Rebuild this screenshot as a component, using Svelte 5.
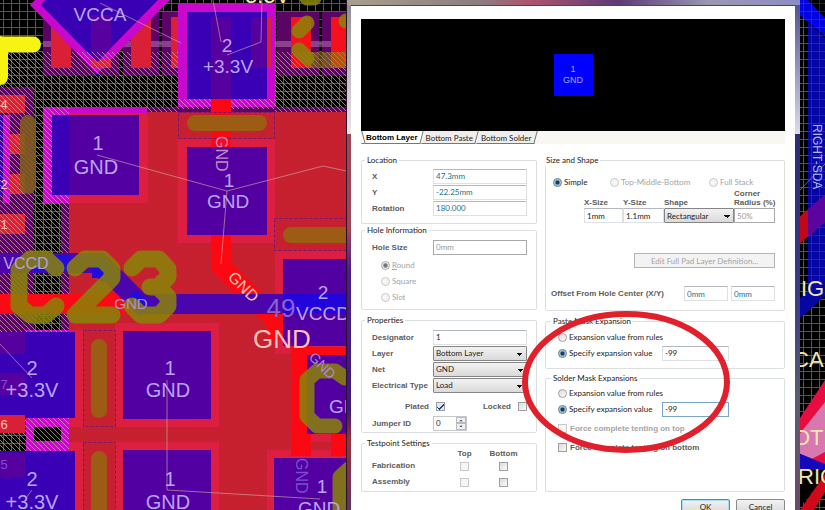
<script>
  let layer = $state('Bottom Layer');
  let net = $state('GND');
  let electrical = $state('Load');
  let shape = $state('Rectangular');
  let hole = $state('round');
  let stack = $state('simple');
  let paste = $state('value');
  let solder = $state('value');

  const location = [
    { id: 'x', label: 'X', value: '47.3mm' },
    { id: 'y', label: 'Y', value: '-22.25mm' },
    { id: 'rotation', label: 'Rotation', value: '180.000' }
  ];
  const holes = [
    { id: 'round', key: 'R', label: 'ound' },
    { id: 'square', key: '', label: 'Square' },
    { id: 'slot', key: '', label: 'Slot' }
  ];
  const lilac = '#b8a4f2';
  const cream = '#f3e6b0';
  const dim = '#7a4fd0';
  const pink = '#ffc0b8';
  const netNames = [
    { t: 'VCCA', x: 100, y: 21, s: 19, c: lilac },
    { t: '2', x: 227, y: 52, s: 19, c: lilac },
    { t: '+3.3V', x: 228, y: 73, s: 19, c: lilac },
    { t: '1', x: 98, y: 150, s: 20, c: lilac },
    { t: 'GND', x: 96, y: 174, s: 20, c: lilac },
    { t: '1', x: 229, y: 187, s: 19, c: lilac },
    { t: 'GND', x: 228, y: 208, s: 19, c: lilac },
    { t: '2', x: 323, y: 299, s: 19, c: lilac },
    { t: 'VCCD', x: 323, y: 320, s: 19, c: lilac },
    { t: '49', x: 281, y: 317, s: 26, c: '#8a62cc' },
    { t: 'GND', x: 282, y: 348, s: 26, c: pink },
    { t: '2', x: 32, y: 375, s: 20, c: lilac },
    { t: '+3.3V', x: 32, y: 397, s: 20, c: lilac },
    { t: '1', x: 170, y: 375, s: 20, c: lilac },
    { t: 'GND', x: 168, y: 397, s: 20, c: lilac },
    { t: '2', x: 32, y: 486, s: 20, c: lilac },
    { t: '+3.3V', x: 32, y: 509, s: 20, c: lilac },
    { t: '1', x: 170, y: 486, s: 20, c: lilac },
    { t: 'GND', x: 168, y: 509, s: 20, c: lilac },
    { t: 'GND', x: 350, y: 413, s: 19, c: lilac },
    { t: '1', x: 322, y: 493, s: 19, c: lilac },
    { t: 'GND', x: 319, y: 515, s: 19, c: lilac },
    { t: 'VCCD', x: 26, y: 269, s: 16, c: '#b7a0d8' },
    { t: 'GND', x: 131, y: 309, s: 15, c: '#c08cc0' },
    { t: '4', x: 4, y: 109, s: 13, c: pink },
    { t: '2', x: 4, y: 189, s: 13, c: pink },
    { t: '1', x: 4, y: 229, s: 13, c: pink },
    { t: '7', x: 4, y: 389, s: 13, c: dim },
    { t: '6', x: 4, y: 429, s: 13, c: pink },
    { t: '5', x: 4, y: 469, s: 13, c: dim }
  ];
  const tags = [
    { t: 'GND', x: 216, y: 136, a: 90, s: 16, c: '#c48ac0' },
    { t: 'GND', x: 227, y: 278, a: 45, s: 16, c: pink },
    { t: 'GND', x: 308, y: 358, a: 45, s: 14, c: '#b08ad0' },
    { t: 'GND', x: 296, y: 458, a: 90, s: 16, c: dim }
  ];
</script>

<main class="desktop">
  <svg class="board" viewBox="0 0 825 510" preserveAspectRatio="xMinYMin slice" aria-hidden="true">
    <defs>
      <pattern id="grid" width="8" height="8" patternUnits="userSpaceOnUse">
        <path d="M3.5 0V8M0 3.5H8" stroke="#555" stroke-width="1" />
      </pattern>
      <pattern id="hatch" width="5" height="5" patternUnits="userSpaceOnUse">
        <path d="M-1 -1L6 6M-1 4L1 6M4 -1L6 1" stroke="#c9b79c" stroke-width=".7" />
      </pattern>
      <pattern id="weave" width="5" height="5" patternUnits="userSpaceOnUse">
        <path d="M-1 -1L6 6M-1 4L1 6M4 -1L6 1" stroke="#a0283a" stroke-width="1" />
      </pattern>
    </defs>
    <rect width="825" height="510" fill="#000" />
    <rect width="825" height="510" fill="url(#grid)" />

    <!-- component row along the top -->
    <g fill="#5c0466">
      <rect x="43" y="17" width="36" height="59" /><rect x="79" y="44" width="40" height="32" />
      <rect x="123" y="12" width="36" height="64" /><rect x="162" y="12" width="20" height="64" />
      <rect x="277" y="12" width="42" height="64" /><rect x="322" y="12" width="30" height="64" />
      <rect x="0" y="87" width="34" height="245" />
      <rect x="147" y="107" width="204" height="6" /><rect x="61" y="200" width="9" height="130" />
    </g>
    <rect x="43" y="41" width="308" height="6" fill="#c58cb8" opacity=".45" />
    <g fill="#da2036">
      <rect x="51" y="17" width="20" height="51" /><rect x="131" y="17" width="20" height="51" />
      <rect x="171" y="17" width="16" height="51" /><rect x="91" y="58" width="20" height="10" />
      <rect x="0" y="95" width="25" height="18" /><rect x="4" y="134" width="21" height="20" />
      <rect x="0" y="174" width="25" height="20" /><rect x="0" y="214" width="25" height="20" />
    </g>
    <g fill="#f4101c"><rect x="291" y="17" width="20" height="51" /><rect x="331" y="17" width="20" height="51" /></g>
    <path d="M30 5L35 0H170L97 74Z" fill="#c808cc" />
    <path d="M91 60H111V62L105 68H91Z" fill="#e02040" />
    <path d="M41 5L45 0H158L97 62Z" fill="#3900b4" />
    <path d="M91 15H111V48L97 62L91 56Z" fill="#5800a0" />
    <path d="M93 74H101L97 78Z" fill="#10005c" />

    <!-- left magenta mask openings -->
    <g fill="#c808cc">
      <rect x="43" y="107" width="104" height="9" /><rect x="43" y="107" width="9" height="96" />
      <rect x="51" y="194" width="19" height="9" /><rect x="3" y="115" width="7" height="88" />
      <rect x="178" y="4" width="97" height="103" />
      <rect x="26" y="330" width="44" height="9" /><rect x="26" y="418" width="44" height="33" />
    </g>
    <rect x="0" y="115" width="3" height="80" fill="#3900b4" />
    <rect x="34" y="427" width="27" height="14" fill="#000" />
    <rect x="0" y="52" width="178" height="60" fill="url(#hatch)" />
    <rect x="178" y="99" width="97" height="10" fill="url(#hatch)" />
    <rect x="275" y="52" width="76" height="60" fill="url(#hatch)" />
    <rect x="0" y="112" width="69" height="398" fill="url(#hatch)" />
    <g fill="#da2036">
      <rect x="51" y="48" width="20" height="20" /><rect x="131" y="48" width="20" height="20" />
    </g>

    <!-- copper pour -->
    <path d="M147 112H351V510H69V203H147Z" fill="#c8202e" />
    <path d="M147 112H351V510H69V203H147Z" fill="url(#weave)" opacity=".25" />
    <g fill="#dc1e40">
      <rect x="139" y="116" width="9" height="87" /><rect x="69" y="112" width="78" height="91" />
      <rect x="178" y="139" width="97" height="104" /><rect x="275" y="251" width="76" height="103" />
      <rect x="69" y="330" width="14" height="97" /><rect x="115" y="323" width="104" height="104" />
      <rect x="69" y="442" width="14" height="68" /><rect x="115" y="442" width="104" height="68" />
      <rect x="267" y="450" width="84" height="60" /><rect x="298" y="346" width="53" height="96" />
    </g>
    <rect x="69" y="107" width="78" height="6" fill="#c808cc" />

    <!-- traces -->
    <path d="M0 304H120L141 304" stroke="#fa0a14" stroke-width="20" fill="none" />
    <path d="M221 98V147M221 235V266L277 322V340M301 346V456M341 434V456" stroke="#fc0812" stroke-width="20" fill="none" />
    <path d="M291 351H351" stroke="#fc0812" stroke-width="8" />
    <path d="M0 263H100L141 304H351" stroke="#4a06ac" stroke-width="20" fill="none" />
    <path d="M34 263H69M92 270H102L108 278M130 296L146 310" stroke="#200cdc" stroke-width="16" fill="none" />

    <!-- pads -->
    <g fill="#5200a2">
      <rect x="52" y="115" width="87" height="80" /><rect x="187" y="147" width="80" height="88" />
      <rect x="283" y="259" width="68" height="87" /><rect x="123" y="331" width="88" height="88" />
      <rect x="123" y="450" width="88" height="60" /><rect x="307" y="355" width="44" height="79" />
      <rect x="274" y="458" width="77" height="52" />
    </g>
    <g fill="#3900b6">
      <rect x="52" y="115" width="17" height="80" /><rect x="187" y="12" width="80" height="87" />
      <rect x="0" y="332" width="75" height="86" /><rect x="0" y="451" width="75" height="59" />
    </g>
    <g fill="#5600a0">
      <rect x="211" y="17" width="20" height="82" /><rect x="251" y="17" width="16" height="51" />
      <rect x="0" y="373" width="25" height="22" /><rect x="0" y="453" width="25" height="25" />
      <rect x="0" y="332" width="25" height="22" />
    </g>
    <rect x="267" y="17" width="4" height="51" fill="#da2036" />
    <rect x="283" y="294" width="68" height="20" fill="#2404dc" />
    <rect x="0" y="415" width="25" height="18" fill="#da2036" />

    <!-- component outlines -->
    <g fill="none" stroke="#7a1478" stroke-dasharray="3 2">
      <rect x="178.500" y="112.500" width="96" height="26" /><rect x="274.500" y="218.500" width="90" height="32" />
      <rect x="83.500" y="330.500" width="32" height="96" /><rect x="83.500" y="442.500" width="32" height="80" />
    </g>
    <g stroke="#9c5c14" stroke-width="16" stroke-linecap="round">
      <path d="M195 123H259M291 235H351M99 347V410M99 459V512" />
      <path d="M28 123V186" stroke="#80601c" opacity=".85" />
    </g>
    <g stroke="#8a8408" stroke-width="17" stroke-linecap="round" stroke-linejoin="round" fill="none" opacity=".85">
      <path d="M56 268L46 259H30L19 270V306L30 315H46L56 306" />
      <path d="M75 268L85 259H102L112 269V278L75 315H112" />
      <path d="M132 268L141 259H159L168 269V277L158 287H150M158 287L168 297V306L159 315H141L132 306" />
      <path d="M345 378L335 371H317L307 380V416L317 426H335" stroke-width="15" />
      <path d="M307 23L299 31M299 50L307 58M307 -2H314M351 21H346" stroke-width="15" />
      <path d="M351 467L340 477V512" stroke-width="15" />
    </g>
    <rect x="307" y="52" width="44" height="16" fill="#8a8408" opacity=".55" />
    <path d="M-6 44.500H33M0 44V77" stroke="#f6f410" stroke-width="16" stroke-linecap="round" />

    <g font-family="'Liberation Sans', Arial, sans-serif">
      {#each netNames as n}
        <text x={n.x} y={n.y} font-size={n.s} fill={n.c} text-anchor="middle">{n.t}</text>
      {/each}
      {#each tags as n}
        <text transform="translate({n.x} {n.y}) rotate({n.a})" font-size={n.s} fill={n.c}>{n.t}</text>
      {/each}
      <text x="245" y="3" font-size="22" fill={cream}>3.3V</text>
    </g>
    <g stroke="#c9a9a4" stroke-width=".8" fill="none" opacity=".8">
      <path d="M100 3L181 43M213 0L221 42M262 0L261 42L227 55M97 155L227 191L323 166L351 172M227 191L221 264" />
      <path d="M0 344L32 378M167 380V490L320 499M26 498L32 490" />
    </g>

    <!-- strip to the right of the dialog -->
    <rect x="808" y="0" width="17" height="290" fill="#0606a4" />
    <path d="M808 0H825V38L808 22Z" fill="#000" />
    <path d="M796 0H808L825 18V36L796 12Z" fill="#0404e0" />
    <path d="M800 0H825V290H800Z" fill="url(#grid)" opacity=".45" />
    <path d="M798 218L825 195V222L798 245Z" fill="#c00818" />
    <path d="M808 209L825 195V222L808 236Z" fill="#5c04a0" />
    <path d="M798 300L825 276V296L798 320Z" fill="#0606a4" />
    <path d="M796 424L825 380V470L796 490Z" fill="#e80c40" />
    <path d="M798 436L825 402V452L798 466Z" fill="#d878b0" />
    <path d="M796 452L825 464V480L796 474Z" fill="#1408b8" />
    <path d="M800 470H825V476L806 500L800 506Z" fill="#000" />
    <path d="M800 510L825 474V492L814 510Z" fill="#d00818" />
    <path d="M800 190L825 164" stroke="#8080b0" stroke-width=".8" />
    <g font-family="'Liberation Sans', Arial, sans-serif" fill={cream} font-size="22">
      <text x="801" y="296">IG</text>
      <text x="793" y="367">CA</text>
      <text x="793" y="445">OT</text>
      <text x="798" y="484">RIG</text>
      <text transform="translate(813 124) rotate(90)" font-size="12" fill="#b8b8f4">RIGHT-SDA</text>
    </g>
  </svg>

  <section class="dialog" aria-label="Pad">
    <div class="client">
      <div class="preview">
        <div class="pad"><span>1</span><span>GND</span></div>
      </div>
      <nav class="tabs">
        <button class="tab on" type="button">Bottom Layer</button>
        <button class="tab" type="button">Bottom Paste</button>
        <button class="tab" type="button">Bottom Solder</button>
      </nav>

      <form class="columns">
        <div class="column">
          <fieldset class="location">
            <legend>Location</legend>
            {#each location as f}
              <div class="row">
                <label class="name" for={f.id}>{f.label}</label>
                <input class="box teal" id={f.id} value={f.value} />
              </div>
            {/each}
          </fieldset>

          <fieldset class="hole">
            <legend>Hole Information</legend>
            <div class="row">
              <label class="name" for="holesize">Hole Size</label>
              <input class="box grey" id="holesize" value="0mm" disabled />
            </div>
            <div class="choices">
              {#each holes as h}
                <label class="choice off">
                  <input type="radio" name="hole" value={h.id} bind:group={hole} disabled />
                  <span><u>{h.key}</u>{h.label}</span>
                </label>
              {/each}
            </div>
          </fieldset>

          <fieldset class="properties">
            <legend>Properties</legend>
            <div class="row">
              <label class="name" for="designator">Designator</label>
              <input class="box" id="designator" value="1" />
            </div>
            <div class="row">
              <label class="name" for="layer">Layer</label>
              <select id="layer" bind:value={layer}><option>Bottom Layer</option><option>Top Layer</option></select>
            </div>
            <div class="row">
              <label class="name" for="net">Net</label>
              <select id="net" bind:value={net}><option>GND</option><option>+3.3V</option></select>
            </div>
            <div class="row">
              <label class="name" for="etype">Electrical Type</label>
              <select id="etype" bind:value={electrical}><option>Load</option><option>Source</option></select>
            </div>
            <div class="row flags">
              <label class="name" for="plated">Plated</label>
              <input type="checkbox" id="plated" checked />
              <label class="name locked" for="locked">Locked</label>
              <input type="checkbox" id="locked" />
            </div>
            <div class="row">
              <label class="name" for="jumper">Jumper ID</label>
              <div class="spin">
                <input class="box" id="jumper" value="0" />
                <span class="arrows">
                  <button type="button" aria-label="Increase"><svg viewBox="0 0 8 6"><path d="M2 4L4 2L6 4Z" /></svg></button>
                  <button type="button" aria-label="Decrease"><svg viewBox="0 0 8 6"><path d="M2 2L4 4L6 2Z" /></svg></button>
                </span>
              </div>
            </div>
          </fieldset>

          <fieldset class="testpoint">
            <legend>Testpoint Settings</legend>
            <table>
              <thead><tr><td></td><th>Top</th><th>Bottom</th></tr></thead>
              <tbody>
                {#each ['Fabrication', 'Assembly'] as t}
                  <tr>
                    <th scope="row">{t}</th>
                    <td><input type="checkbox" disabled aria-label="{t} top" /></td>
                    <td><input type="checkbox" aria-label="{t} bottom" /></td>
                  </tr>
                {/each}
              </tbody>
            </table>
          </fieldset>
        </div>

        <div class="column">
          <fieldset class="size">
            <legend>Size and Shape</legend>
            <div class="stacks">
              <label class="choice"><input type="radio" name="stack" value="simple" bind:group={stack} /><span>Simple</span></label>
              <label class="choice off"><input type="radio" name="stack" value="tmb" bind:group={stack} disabled /><span>Top-Middle-Bottom</span></label>
              <label class="choice off"><input type="radio" name="stack" value="full" bind:group={stack} disabled /><span>Full Stack</span></label>
            </div>
            <div class="sizes">
              <label class="name" for="xs">X-Size</label>
              <label class="name" for="ys">Y-Size</label>
              <label class="name" for="shape">Shape</label>
              <label class="name" for="radius">Corner<br />Radius&nbsp;(%)</label>
              <input class="box" id="xs" value="1mm" />
              <input class="box" id="ys" value="1.1mm" />
              <select id="shape" bind:value={shape}><option>Rectangular</option><option>Round</option></select>
              <input class="box grey" id="radius" value="50%" disabled />
            </div>
            <button class="edit" type="button" disabled>Edit Full Pad Layer Definition...</button>
            <div class="offset">
              <label class="name" for="ox">Offset From Hole Center (X/Y)</label>
              <input class="box teal" id="ox" value="0mm" />
              <input class="box teal" value="0mm" aria-label="Offset Y" />
            </div>
          </fieldset>

          <fieldset class="mask paste">
            <legend>Paste Mask Expansion</legend>
            <label class="choice"><input type="radio" name="paste" value="rules" bind:group={paste} /><span>Expansion value from rules</span></label>
            <div class="value">
              <label class="choice"><input type="radio" name="paste" value="value" bind:group={paste} /><span>Specify expansion value</span></label>
              <input class="box" value="-99" aria-label="Paste mask expansion" />
            </div>
          </fieldset>

          <fieldset class="mask solder">
            <legend>Solder Mask Expansions</legend>
            <label class="choice"><input type="radio" name="solder" value="rules" bind:group={solder} /><span>Expansion value from rules</span></label>
            <div class="value">
              <label class="choice"><input type="radio" name="solder" value="value" bind:group={solder} /><span>Specify expansion value</span></label>
              <input class="box active" value="-99" aria-label="Solder mask expansion" />
            </div>
            <div class="tents">
              <label class="tent off"><input type="checkbox" disabled /><span>Force complete tenting on top</span></label>
              <label class="tent"><input type="checkbox" /><span>Force complete tenting on bottom</span></label>
            </div>
          </fieldset>
        </div>
      </form>

      <footer>
        <button class="push default" type="button">OK</button>
        <button class="push" type="button">Cancel</button>
      </footer>
    </div>

    <svg class="marker" viewBox="0 0 210 142" aria-hidden="true">
      <ellipse cx="105" cy="71" rx="101" ry="68" fill="none" stroke="#e0202a" stroke-width="6" />
    </svg>
  </section>
</main>

<style>
  :global(body) { margin: 0; background: #000; }
  .desktop {
    position: relative;
    height: 100vh;
    overflow: hidden;
    font: 8px/12px Lato, 'Liberation Sans', Arial, sans-serif;
    color: #222;
  }
  .desktop * { box-sizing: border-box; }
  .board { position: absolute; inset: 0; width: 100%; height: 100%; }
  .dialog {
    position: relative;
    margin: 0 25px 0 346px;
    padding: 5px 5px 0 4px;
    min-height: 100vh;
    background:
      linear-gradient(90deg, #a8a08c, #8a7c80 30%, #b0546c 40%, #5c3a78 60%, #9a98b0 80%, #8c8cc8) 0 0 / 100% 5px no-repeat,
      linear-gradient(#8c8890, #ece6ea 134px, #a04458 134px, #a04458 230px, #4a1c8c 270px, #3c1878 410px, #98303c 440px, #5a3460) 0 0 / 5px 100% no-repeat,
      linear-gradient(#4c4c90, #dcdcec 134px, #2c2c74 134px, #3c3c84 300px, #5c5c70 400px, #6c4868) 100% 0 / 5px 100% no-repeat;
    border-left: 1px solid #281028;
  }
  .client {
    display: flex;
    flex-direction: column;
    min-height: calc(100vh - 5px);
    padding: 13px 10px 0;
    background: #fff;
    border-top: 1px solid #4c4450;
  }
  .preview { display: flex; justify-content: center; padding: 35px 0; background: #000; height: 112px; }
  .pad {
    display: flex;
    flex-direction: column;
    align-items: center;
    justify-content: center;
    width: 39px;
    background: #0000fe;
    color: #a8a8ff;
    font: 9px/11px 'Liberation Sans', Arial, sans-serif;
  }
  .tabs { display: flex; height: 13px; background: #f9f7f3; padding-left: 2px; }
  .tab {
    position: relative;
    height: 13px;
    margin: 0;
    padding: 0 5px 0 3px;
    border: 0;
    background: none;
    color: #222;
    font: inherit;
    z-index: 0;
  }
  .tab::before {
    content: '';
    position: absolute;
    inset: 0 1px 0 0;
    background: #efeeec;
    border: 1px solid #777;
    border-top: 0;
    border-left: 0;
    transform: skewX(-15deg);
    z-index: -1;
  }
  .tab.on { font: bold 8px/12px 'Liberation Sans', Arial, sans-serif; color: #000; }
  .tab.on::before { background: #fff; }
  .tab.on::after {
    content: '';
    position: absolute;
    inset: 0 50% 0 0;
    background: #fff;
    border: 1px solid #777;
    border-width: 0 0 1px 1px;
    transform: skewX(15deg);
    z-index: -1;
  }
  .columns { display: grid; grid-template-columns: 11fr 15fr; column-gap: 8px; margin-top: 10px; }
  .column { display: flex; flex-direction: column; min-width: 0; }
  fieldset { margin: 0; min-width: 0; border: 1px solid #dcdfe0; border-radius: 2px; padding: 2px 9px 7px 10px; }
  legend { margin-left: -7px; padding: 0 2px; line-height: 12px; color: #222; }
  .row { display: grid; grid-template-columns: 61px 1fr; height: 16px; align-items: center; }
  .name { font: bold 8px/9px 'Liberation Sans', Arial, sans-serif; color: #5c5c5c; white-space: nowrap; }
  .box, select {
    width: 100%;
    min-width: 0;
    height: 15px;
    margin: 0;
    padding: 0 2px;
    border: 1px solid #dde1e4;
    border-top-color: #b4b8bc;
    border-radius: 0;
    background: #fff;
    color: #222;
    font: inherit;
    outline: 0;
  }
  .teal { color: #1c7088; }
  .grey { color: #999; border-color: #aaa; }
  .active { border-color: #7aa4c8; }
  select {
    appearance: none;
    border: 1px solid #858585;
    border-radius: 1px;
    background:
      linear-gradient(135deg, #111 50%, transparent 50%) calc(100% - 3px) 6px / 3px 3px no-repeat,
      linear-gradient(225deg, #111 50%, transparent 50%) calc(100% - 6px) 6px / 3px 3px no-repeat,
      linear-gradient(#f2f2f2, #dadada);
  }
  input[type='radio'], input[type='checkbox'] {
    appearance: none;
    flex: none;
    width: 9px;
    height: 9px;
    margin: 0;
    border: 1px solid #a0a0a0;
    background: linear-gradient(135deg, #dcdcdc, #fafafa);
  }
  input[type='radio'] { border-radius: 50%; }
  input[type='radio']:checked { border-color: #567890; background: radial-gradient(#183c5c 0 30%, #8cb4d0 50%, #dce8f0 75%); }
  input:disabled[type='radio'], input:disabled[type='checkbox'] { border-color: #c8c8c8; background: #f6f6f6; }
  input:disabled[type='radio']:checked { background: radial-gradient(#777 0 35%, #eee 55%); border-color: #aaa; }
  #plated {
    background:
      linear-gradient(45deg, transparent 42%, #203c80 42% 60%, transparent 60%) 0 4px / 3px 3px no-repeat,
      linear-gradient(135deg, transparent 40%, #203c80 40% 62%, transparent 62%) 2px 1px / 5px 6px no-repeat,
      #dce6f4;
  }
  .choice { display: flex; align-items: center; gap: 2px; height: 16px; white-space: nowrap; }
  .off { color: #a4a4a4; }
  .hole { padding-top: 3px; padding-bottom: 4px; }
  .choices { padding: 2px 0 0 9px; }
  .properties { margin-top: 4px; padding-top: 3px; padding-bottom: 1px; }
  .flags { grid-template-columns: 57px 9px 1fr 9px; column-gap: 7px; margin: 5px 0 1px; }
  .flags .name { text-align: right; }
  .spin { display: flex; width: 34px; height: 15px; border: 1px solid #c4c8cc; }
  .spin .box { border: 0; height: 13px; flex: 1; }
  .arrows { display: flex; flex-direction: column; width: 10px; }
  .arrows button { flex: 1; display: flex; min-height: 0; padding: 0; border: 1px solid #bbb; background: #f0f0f0; }
  .arrows svg { width: 8px; height: 5px; fill: #335; }
  .testpoint { margin-top: 4px; padding-top: 0; padding-bottom: 1px; }
  table { border-collapse: collapse; table-layout: fixed; width: 151px; font: bold 8px/8px 'Liberation Sans', Arial, sans-serif; color: #5c5c5c; }
  thead td { width: 73px; }
  td, th { padding: 0; height: 16px; text-align: center; vertical-align: middle; }
  thead td, thead th { height: 9px; }
  tbody th { text-align: left; }
  td input[type='checkbox'] { display: block; margin: 0 auto; }
  .size { padding: 8px 9px 9px 5px; }
  .stacks { display: grid; grid-template-columns: 57px 99px 1fr; padding-left: 2px; height: 15px; }
  .sizes { display: grid; grid-template-columns: 39px 41px 70px 1fr; padding-left: 33px; row-gap: 1px; align-items: end; }
  .edit {
    display: block;
    width: 141px;
    height: 15px;
    margin: 30px 0 18px auto;
    padding: 0;
    border: 1px solid #b4b4b4;
    background: #f3f3f3;
    color: #a4a4a4;
    font: inherit;
  }
  .offset { display: grid; grid-template-columns: 1fr 44px 44px; column-gap: 3px; align-items: center; }
  .mask { padding-left: 12px; }
  .paste { margin-top: 4px; }
  .solder { margin-top: 3px; padding-top: 1px; flex: 1; }
  .value { display: grid; grid-template-columns: 104px 67px; align-items: center; }
  .tents { padding-top: 2px; }
  .tent { display: flex; align-items: center; gap: 3px; height: 19px; font: bold 8px/9px 'Liberation Sans', Arial, sans-serif; color: #5c5c5c; white-space: nowrap; }
  .tent.off { color: #a4a4a4; }
  footer { display: flex; justify-content: flex-end; gap: 6px; padding-top: 7px; }
  .push {
    width: 49px;
    height: 16px;
    padding: 0;
    border: 1px solid #8a8a8a;
    border-radius: 2px;
    background: linear-gradient(#f2f2f2, #d8d8d8);
    color: #222;
    font: inherit;
  }
  .default { border-color: #3c94bc; box-shadow: inset 0 0 0 1px #a8dcf0; }
  .marker { position: absolute; left: 174px; top: 311px; width: 210px; height: 142px; pointer-events: none; }
</style>
